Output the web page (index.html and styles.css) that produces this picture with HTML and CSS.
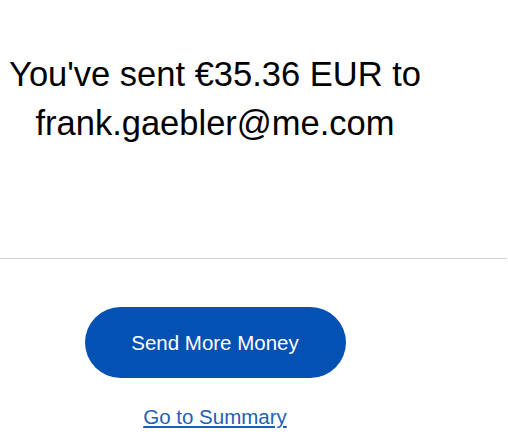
FILE: index.html
```html
<!DOCTYPE html>
<html>
<head>
<meta charset="utf-8">
<link rel="stylesheet" href="styles.css">
</head>
<body>
<main class="page">
  <section class="message">
    <h1 class="title">You've sent €35.36 EUR to frank.gaebler@me.com</h1>
  </section>
  <hr class="divider">
  <section class="actions">
    <button class="primary">Send More Money</button>
    <a class="link" href="#">Go to Summary</a>
  </section>
</main>
</body>
</html>
```

FILE: styles.css
```css
html, body {
  margin: 0;
  padding: 0;
  background: #fff;
}
body {
  font-family: "Liberation Sans", Arial, sans-serif;
  color: #000;
}
.page {
  width: 508px;
}
.message {
  width: 430px;
  padding-top: 50px;
  height: 258px;
  box-sizing: border-box;
}
.title {
  margin: 0;
  font-size: 34.5px;
  font-weight: normal;
  line-height: 49px;
  text-align: center;
}
.divider {
  margin: 0;
  border: 0;
  border-top: 1px solid #d2d2d2;
  width: 507px;
}
.actions {
  width: 430px;
  display: flex;
  flex-direction: column;
  align-items: center;
  padding-top: 48px;
}
.primary {
  width: 261px;
  height: 71px;
  border: 0;
  border-radius: 36px;
  background: #0451b4;
  color: #fff;
  font-family: "Liberation Sans", Arial, sans-serif;
  font-size: 20.5px;
  padding: 0;
}
.link {
  margin-top: 27px;
  font-size: 20.5px;
  color: #1f5fb4;
  text-decoration: underline;
}
```
